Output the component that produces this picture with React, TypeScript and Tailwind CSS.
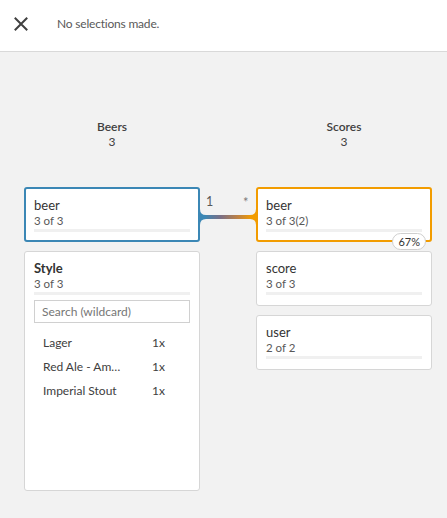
import React from 'react';

const font = { fontFamily: 'Lato, "Liberation Sans", sans-serif' };

const FieldCard = ({
  name,
  count,
  className,
}: {
  name: string;
  count: string;
  className?: string;
}) => (
  <div className={`bg-white rounded-[3px] ${className ?? ''}`}>
    <div className="text-[13px] leading-[16px] text-[#333]">{name}</div>
    <div className="text-[11.5px] leading-[15px] text-[#595959]">{count}</div>
    <div className="h-[3px] bg-[#f0f0f0] mt-[1px]" />
  </div>
);

const Connector = () => (
  <svg width="56" height="56" viewBox="0 0 56 56" className="block">
    <defs>
      <linearGradient id="lnk" x1="0" x2="1" y1="0" y2="0">
        <stop offset="0" stopColor="#3b87b5" />
        <stop offset="0.35" stopColor="#7b6f85" />
        <stop offset="0.7" stopColor="#bd8246" />
        <stop offset="1" stopColor="#f29c00" />
      </linearGradient>
    </defs>
    <rect x="4" y="28" width="48" height="4" fill="url(#lnk)" />
    <path d="M0 22 Q0 28 6 28 L6 32 Q0 32 0 38 Z" fill="#3b87b5" />
    <path d="M56 22 Q56 28 50 28 L50 32 Q56 32 56 38 Z" fill="#f29c00" />
    <text x="6" y="19" fontSize="12.5" fill="#595959" style={font}>
      1
    </text>
    <text x="43" y="20" fontSize="13" fill="#7a7a7a" style={font}>
      *
    </text>
  </svg>
);

export default function App() {
  return (
    <div className="w-[447px] h-[518px] bg-[#f2f2f2] overflow-hidden" style={font}>
      <div className="h-[52px] bg-white border-b border-[#d9d9d9] flex items-center">
        <svg width="14" height="14" viewBox="0 0 14 14" className="ml-[14px] -mt-[3px]">
          <path
            d="M1.5 1.5 L12.5 12.5 M12.5 1.5 L1.5 12.5"
            stroke="#404040"
            strokeWidth="2"
            strokeLinecap="square"
          />
        </svg>
        <span className="ml-[29px] text-[12px] text-[#595959] -mt-[3px] tracking-[-0.2px]">
          No selections made.
        </span>
      </div>

      <div className="pl-[24px] pt-[67px]">
        <div className="flex">
          <div className="w-[176px] text-center text-[12px] leading-[15px] text-[#404040]">
            <div className="font-semibold">Beers</div>
            <div>3</div>
          </div>
          <div className="w-[56px]" />
          <div className="w-[176px] text-center text-[12px] leading-[15px] text-[#404040]">
            <div className="font-semibold">Scores</div>
            <div>3</div>
          </div>
        </div>

        <div className="flex mt-[38px]">
          <div className="w-[176px] flex flex-col gap-[9px]">
            <FieldCard
              name="beer"
              count="3 of 3"
              className="border-2 border-[#3b87b5] px-[8px] pt-[8px] pb-[8px]"
            />
            <div className="bg-white rounded-[3px] border border-[#d6d6d6] h-[240px] px-[9px] pt-[8px]">
              <div className="text-[13px] leading-[16px] font-bold text-[#333]">
                Style
              </div>
              <div className="text-[11.5px] leading-[15px] text-[#595959]">
                3 of 3
              </div>
              <div className="h-[3px] bg-[#f0f0f0] mt-[1px]" />
              <div className="mt-[5px] h-[23px] border border-[#d0d0d0] flex items-center px-[7px] text-[12px] text-[#767676]">
                Search (wildcard)
              </div>
              <div className="mt-[8px] flex flex-col text-[12px] text-[#404040]">
                {[
                  ['Lager', '1x'],
                  ['Red Ale - Am…', '1x'],
                  ['Imperial Stout', '1x'],
                ].map(([label, freq]) => (
                  <div key={label} className="h-[24px] flex items-center pl-[9px]">
                    <span className="w-[109px] truncate">{label}</span>
                    <span>{freq}</span>
                  </div>
                ))}
              </div>
            </div>
          </div>

          <div className="w-[56px]">
            <Connector />
          </div>

          <div className="w-[176px] flex flex-col gap-[9px]">
            <div className="relative">
              <FieldCard
                name="beer"
                count="3 of 3(2)"
                className="border-2 border-[#f29c00] px-[8px] pt-[8px] pb-[8px]"
              />
              <div className="absolute right-[6px] -bottom-[8px] h-[17px] px-[5px] rounded-full bg-white border border-[#cfcfcf] text-[11px] leading-[15px] text-[#333]">
                67%
              </div>
            </div>
            <FieldCard
              name="score"
              count="3 of 3"
              className="border border-[#d6d6d6] px-[9px] pt-[8px] pb-[10px]"
            />
            <FieldCard
              name="user"
              count="2 of 2"
              className="border border-[#d6d6d6] px-[9px] pt-[8px] pb-[10px]"
            />
          </div>
        </div>
      </div>
    </div>
  );
}
